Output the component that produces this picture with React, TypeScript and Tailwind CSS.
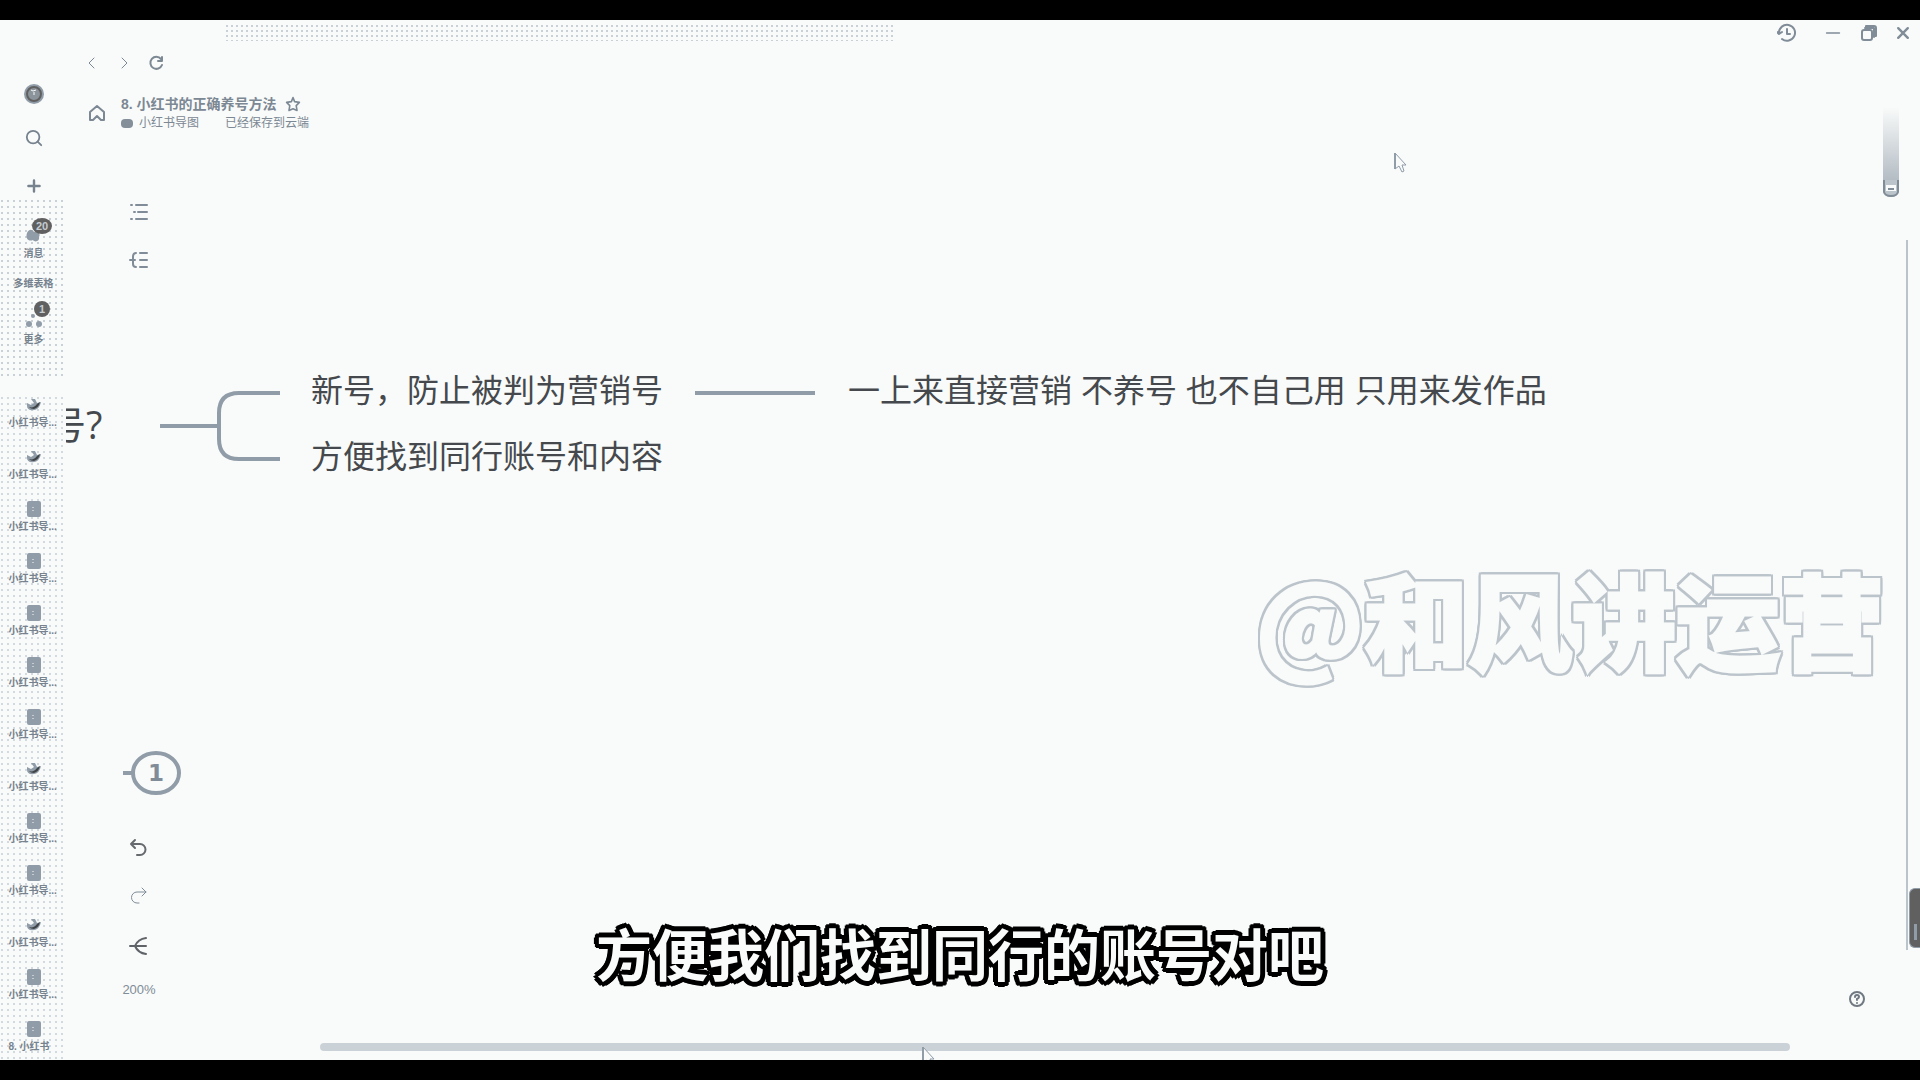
import React from "react";

type FileKind = "bird" | "doc";

const files: { kind: FileKind; label: string }[] = [
  { kind: "bird", label: "小红书导..." },
  { kind: "bird", label: "小红书导..." },
  { kind: "doc", label: "小红书导..." },
  { kind: "doc", label: "小红书导..." },
  { kind: "doc", label: "小红书导..." },
  { kind: "doc", label: "小红书导..." },
  { kind: "doc", label: "小红书导..." },
  { kind: "bird", label: "小红书导..." },
  { kind: "doc", label: "小红书导..." },
  { kind: "doc", label: "小红书导..." },
  { kind: "bird", label: "小红书导..." },
  { kind: "doc", label: "小红书导..." },
  { kind: "doc", label: "8. 小红书" },
];

const line = {
  fill: "none",
  stroke: "currentColor",
  strokeLinecap: "round" as const,
  strokeLinejoin: "round" as const,
};

function Icon({ children, size = 20, width = 2 }: { children: React.ReactNode; size?: number; width?: number }) {
  return (
    <svg width={size} height={size} viewBox="0 0 20 20" strokeWidth={width} {...line} aria-hidden="true">
      {children}
    </svg>
  );
}

function FileIcon({ kind }: { kind: FileKind }) {
  if (kind === "bird") {
    return (
      <svg width="14" height="14" viewBox="0 0 14 14" aria-hidden="true">
        <path d="M4 1h4l2 4 4-1c-1 4-3 8-7 8C3 13 0 11 0 8V5l4 2 3-2z" fill="#909ca8" />
        <path d="M2 9c3 1 6 0 8-3l3-2c-1 4-3 6-6 7-2 0-4-1-5-2z" fill="#404346" />
      </svg>
    );
  }
  return (
    <svg width="14" height="16" viewBox="0 0 14 16" aria-hidden="true">
      <rect width="14" height="16" rx="2" fill="#909ca8" />
      <path d="M6 6v5" stroke="#f9fbfa" strokeWidth="1" strokeDasharray="1 2" />
    </svg>
  );
}

function Sidebar() {
  return (
    <aside className="relative z-10 flex w-[66px] shrink-0 flex-col overflow-hidden bg-[#f9fbfa] pl-px text-[#76828e]">
      <nav aria-label="主导航" className="flex flex-col">
        <button aria-label="头像" className="mt-[60px] flex h-7 w-full items-center justify-center">
          <svg width="20" height="20" viewBox="0 0 20 20" aria-hidden="true">
            <circle cx="10" cy="10" r="10" fill="#909ca8" />
            <circle cx="10" cy="10" r="7" fill="#8b939b" stroke="#606060" strokeWidth="2" />
            <path d="M7 6l2 1 3-1M10 8v3" stroke="#f9fbfa" fill="none" />
          </svg>
        </button>
        <button aria-label="搜索" className="mt-4 flex h-7 w-full items-center justify-center">
          <Icon size={18}>
            <circle cx="9" cy="9" r="7" />
            <path d="M14 14l4 4" />
          </Icon>
        </button>
        <button aria-label="新建" className="mt-5 flex h-7 w-full items-center justify-center">
          <Icon size={16} width={3}>
            <path d="M10 3v14M3 10h14" />
          </Icon>
        </button>
        <div className="flex h-[180px] flex-col bg-[radial-gradient(1px_1px_at_1px_1px,#c9d0d6_100%,transparent_100%)] bg-[length:6px_6px]">
          <button className="mt-4 flex h-[50px] w-full flex-col items-center">
            <svg width="36" height="28" viewBox="0 0 36 28" aria-hidden="true">
              <path d="M11 17c2-4 5-4 7-1 4-2 7 2 5 5 1 4-4 6-6 3-4 2-8-1-6-7z" fill="#909ca8" />
              <ellipse cx="26" cy="10" rx="10" ry="8" fill="#606060" />
              <text x="26" y="14" textAnchor="middle" fontSize="11" fontWeight="700" fill="#c5ccd2" fontFamily="Liberation Sans, sans-serif">20</text>
            </svg>
            <span className="text-[10px] font-bold leading-5">消息</span>
          </button>
          <span className="mt-3 w-full text-center text-[10px] font-bold leading-3">多维表格</span>
          <button className="mt-2 flex h-[54px] w-full flex-col items-center">
            <svg width="36" height="32" viewBox="0 0 36 32" aria-hidden="true">
              <circle cx="26" cy="11" r="8" fill="#606060" />
              <text x="26" y="15" textAnchor="middle" fontSize="11" fontWeight="700" fill="#c5ccd2" fontFamily="Liberation Sans, sans-serif">1</text>
              <circle cx="13" cy="26" r="3" fill="#909ca8" />
              <circle cx="23" cy="26" r="3" fill="#909ca8" />
              <circle cx="17" cy="18" r="2" fill="#909ca8" />
            </svg>
            <span className="text-[10px] font-bold leading-5">更多</span>
          </button>
        </div>
      </nav>
      <ul className="relative mt-auto flex flex-col bg-[radial-gradient(1px_1px_at_1px_1px,#d3dadf_100%,transparent_100%)] bg-[length:6px_6px]">
        {files.map((f, i) => (
          <li key={i} className="h-[52px] last:h-[39px]">
            <button className="flex w-full flex-col items-center">
              <span className="flex h-4 items-center">
                <FileIcon kind={f.kind} />
              </span>
              <span className="mt-1 w-[50px] whitespace-nowrap text-left text-[10px] font-bold leading-3">{f.label}</span>
            </button>
          </li>
        ))}
      </ul>
    </aside>
  );
}

function TitleBar() {
  return (
    <header className="flex h-[26px] shrink-0 items-center justify-end text-[#808c97]">
      <div className="ml-40 mr-auto h-4 w-[36%] bg-[radial-gradient(1px_1px_at_1px_1px,#c9d0d6_100%,transparent_100%)] bg-[length:5px_5px]" />
      <div className="flex items-center pr-[9px]">
        <button aria-label="历史记录" className="mr-7">
          <Icon size={20}>
            <path d="M2 10a8 8 0 1 1 3 6M0 9l2 2 3-2M10 6v5h3" />
          </Icon>
        </button>
        <button aria-label="最小化" className="mr-5">
          <Icon size={16}>
            <path d="M2 10h16" />
          </Icon>
        </button>
        <button aria-label="还原" className="mr-[18px]">
          <svg width="16" height="16" viewBox="0 0 16 16" {...line} strokeWidth="2" aria-hidden="true">
            <rect x="1" y="5" width="10" height="10" rx="2" />
            <path d="M5 3V1h8a2 2 0 0 1 2 2v8h-2" />
            <path d="M4 3h9v9" />
          </svg>
        </button>
        <button aria-label="关闭">
          <Icon size={16} width={3}>
            <path d="M4 4l12 12M16 4L4 16" />
          </Icon>
        </button>
      </div>
    </header>
  );
}

function DocumentHeader() {
  return (
    <div className="relative z-10 shrink-0 text-[#7c8893]">
      <div className="flex h-[34px] items-center pl-4">
        <button aria-label="后退" className="mr-3">
          <Icon width={1}>
            <path d="M12 5l-5 5 5 5" />
          </Icon>
        </button>
        <button aria-label="前进" className="mr-3">
          <Icon width={1}>
            <path d="M8 5l5 5-5 5" />
          </Icon>
        </button>
        <button aria-label="刷新">
          <Icon>
            <path d="M15 6a6 6 0 1 0 1 6M16 4v4h-4" />
          </Icon>
        </button>
      </div>
      <div className="flex items-center pl-[21px] pt-[14px]">
        <button aria-label="主页" className="mr-[14px]">
          <Icon>
            <path d="M3 17V9l7-6 7 6v8h-3l-4-4-4 4z" />
          </Icon>
        </button>
        <div>
          <div className="flex h-5 items-center">
            <h1 className="text-[14px] font-bold leading-5">8. 小红书的正确养号方法</h1>
            <button aria-label="收藏" className="ml-2">
              <Icon size={16}>
                <path d="M10 2l2 5 6 1-4 4 1 6-5-2-5 2 1-6-4-4 6-1z" />
              </Icon>
            </button>
          </div>
          <div className="flex h-[18px] items-center text-[12px] leading-4">
            <span className="mr-[6px] h-[9px] w-3 rounded-sm bg-[#848f9a]" />
            <a href="#folder">小红书导图</a>
            <span className="ml-[26px]">已经保存到云端</span>
          </div>
        </div>
      </div>
    </div>
  );
}

/* Mind-map nodes sit on a free canvas. */
function MindMap() {
  return (
    <div className="absolute inset-0 overflow-hidden text-[#45494d]">
      <div className="absolute left-[-18px] top-[380px] whitespace-nowrap font-['Open_Sans','Noto_Sans_CJK_SC',sans-serif] text-[38px] leading-[48px]">号?</div>
      <svg className="absolute left-[94px] top-[366px]" width="660" height="100" viewBox="0 0 660 100" fill="none" stroke="#909ca8" strokeWidth="4" aria-hidden="true">
        <path d="M0 40H59M120 7H79Q59 7 59 27V53Q59 73 79 73H120M535 7H655" />
      </svg>
      <div className="absolute left-[245px] top-[349px] whitespace-nowrap text-[32px] leading-[44px]">新号，防止被判为营销号</div>
      <div className="absolute left-[245px] top-[415px] whitespace-nowrap text-[32px] leading-[44px]">方便找到同行账号和内容</div>
      <div className="absolute left-[782px] top-[349px] whitespace-nowrap text-[32px] leading-[44px]">
        一上来直接营销 不养号 也不自己用 只用来发作品
      </div>
      <svg className="absolute left-[57px] top-[730px]" width="60" height="48" viewBox="0 0 60 48" fill="none" stroke="#909ca8" strokeWidth="4" aria-label="1">
        <path d="M0 23h9" />
        <ellipse cx="33" cy="23" rx="23" ry="20" />
        <text x="33" y="31" textAnchor="middle" fontSize="23" fontWeight="700" fill="#808c97" stroke="none" fontFamily="DejaVu Sans, sans-serif">1</text>
      </svg>
    </div>
  );
}

function Tools() {
  return (
    <div className="relative z-10 flex w-[146px] flex-1 flex-col items-center text-[#808c97]">
      <button aria-label="大纲" className="mt-[70px] h-5">
        <Icon>
          <path d="M2 3h1M7 3h11M5 10h1M9 10h9M2 17h1M7 17h11" />
        </Icon>
      </button>
      <button aria-label="结构" className="mt-7 h-5">
        <Icon>
          <path d="M7 3Q4 3 4 7V14Q4 17 7 17M1 10H6M11 3h7M11 10h7M11 17h7" />
        </Icon>
      </button>
      <div className="mt-auto flex flex-col items-center pb-[43px]">
        <button aria-label="撤销" className="h-5 text-[#66696d]">
          <Icon>
            <path d="M6 2L2 6l4 4M2 6h9a5 5 0 0 1 0 11H8" />
          </Icon>
        </button>
        <button aria-label="重做" className="mt-7 h-5">
          <Icon width={1}>
            <path d="M13 2l4 4-4 4M17 6H8a5 5 0 0 0 0 11h2" />
          </Icon>
        </button>
        <button aria-label="分支" className="mt-[30px] h-5 text-[#606468]">
          <Icon>
            <path d="M1 10h16M17 2Q9 3 6 10Q9 17 17 18" />
          </Icon>
        </button>
        <button className="mt-6 text-[13px] leading-5">200%</button>
      </div>
    </div>
  );
}

function Pointer() {
  return (
    <svg width="14" height="22" viewBox="0 0 14 22" fill="#f9fbfa" stroke="#909ca8" strokeWidth="1" aria-hidden="true">
      <path d="M2 1v16l4-3 3 6 2-1-2-6h4z" />
      <path d="M2 1v16" strokeWidth="2" />
    </svg>
  );
}

export default function App() {
  return (
    <div className="flex min-h-screen flex-col bg-[#f9fbfa] font-['Liberation_Sans','Noto_Sans_CJK_SC',sans-serif]">
      <div className="h-5 shrink-0 bg-black" />
      <div className="flex flex-1">
        <Sidebar />
        <main className="relative flex min-w-0 flex-1 flex-col">
          <MindMap />
          <TitleBar />
          <div className="flex flex-1">
            <div className="relative flex min-w-0 flex-1 flex-col">
              <DocumentHeader />
              <Tools />
              <div className="ml-[254px] mr-20 mb-[9px] h-2 shrink-0 rounded-full bg-[#cbd2d7]" />
              <button aria-label="帮助" className="absolute bottom-[52px] right-1 z-10 text-[#707981]">
                <svg width="18" height="18" viewBox="0 0 18 18" {...line} strokeWidth="2" aria-hidden="true">
                  <circle cx="9" cy="9" r="7" />
                  <path d="M7 7q0-2 2-2t2 2q0 1-2 2v1M9 13v0" />
                </svg>
              </button>
            </div>
            <div className="relative z-10 flex w-[50px] shrink-0 flex-col">
              <div className="ml-[13px] mt-[61px] flex h-[90px] w-4 flex-col justify-end rounded-b-lg bg-linear-to-b from-transparent to-[#a4aeb8]">
                <svg width="16" height="18" viewBox="0 0 16 18" fill="#f9fbfa" stroke="#808c97" strokeWidth="2" aria-hidden="true">
                  <path d="M1 1V13Q2 17 8 17Q14 17 15 13V1" fill="#bcc4cb" />
                  <path d="M3 6h10v6H3z" stroke="none" />
                  <path d="M5 10h6" />
                </svg>
              </div>
              <div className="ml-9 mt-[43px] mb-[110px] w-[2px] flex-1 bg-[#bcc4cb]" />
              <button aria-label="侧栏手柄" className="absolute bottom-28 right-0 flex h-[60px] w-[11px] items-center justify-center rounded-l-md border border-r-0 border-[#909ca8] bg-[#606060]">
                <span className="mt-7 h-4 w-[3px] bg-[#909ca8]" />
              </button>
            </div>
          </div>
          <div className="pointer-events-none absolute right-9 top-[518px] whitespace-nowrap font-['Noto_Sans_CJK_SC',sans-serif] text-[104px] font-black leading-[160px] text-[#f9fbfa] [-webkit-text-stroke:3px_#f9fbfa] [filter:drop-shadow(2px_0_0_#bcc4cb)_drop-shadow(-2px_0_0_#bcc4cb)_drop-shadow(0_2px_0_#bcc4cb)_drop-shadow(0_-2px_0_#bcc4cb)]">
            @和风讲运营
          </div>
          <div className="absolute left-[1327px] top-[132px]">
            <Pointer />
          </div>
          <div className="absolute bottom-0 left-[855px] h-[14px] overflow-hidden">
            <Pointer />
          </div>
        </main>
      </div>
      <p className="pointer-events-none absolute inset-x-0 bottom-[86px] z-20 text-center font-['Noto_Sans_CJK_SC',sans-serif] text-[56px] font-bold leading-[84px] text-[#f9fbfa] [text-shadow:5px_0_#000,-5px_0_#000,0_5px_#000,0_-5px_#000,4px_3px_#000,4px_-3px_#000,-4px_3px_#000,-4px_-3px_#000,3px_4px_#000,3px_-4px_#000,-3px_4px_#000,-3px_-4px_#000]">
        方便我们找到同行的账号对吧
      </p>
      <div className="h-5 shrink-0 bg-black" />
    </div>
  );
}
